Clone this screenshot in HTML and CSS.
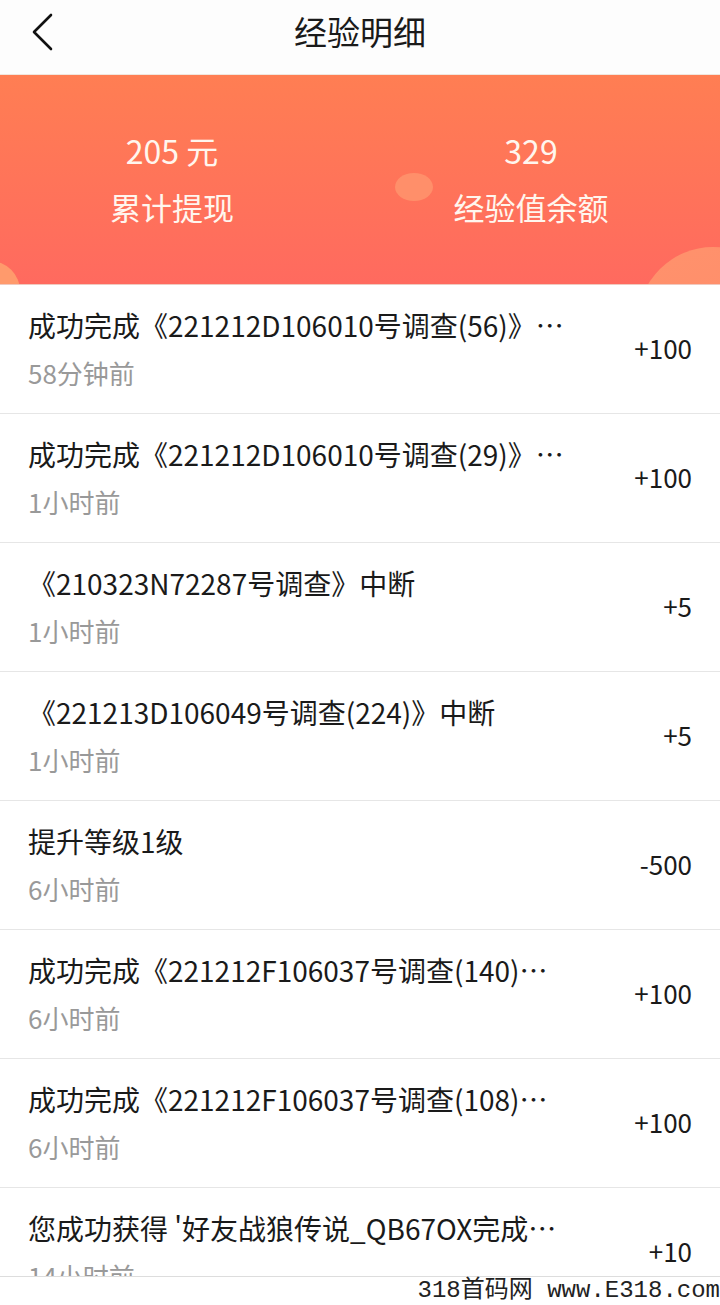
FILE: index.html
```html
<!DOCTYPE html>
<html lang="zh-CN">
<head>
<meta charset="utf-8">
<title>经验明细</title>
<link rel="stylesheet" href="styles.css">
</head>
<body>
<div class="page">
  <header class="topbar">
    <svg class="back" width="24" height="40" viewBox="0 0 24 40" aria-hidden="true">
      <polyline points="20,3 3,20 20,37" fill="none" stroke="#111" stroke-width="2.6" stroke-linecap="round" stroke-linejoin="round"/>
    </svg>
    <h1 class="title">经验明细</h1>
  </header>

  <section class="banner">
    <span class="dot dot-mid"></span>
    <span class="dot dot-left"></span>
    <span class="dot dot-right"></span>
    <div class="stat">
      <div class="stat-num">205 元</div>
      <div class="stat-label">累计提现</div>
    </div>
    <div class="stat">
      <div class="stat-num">329</div>
      <div class="stat-label">经验值余额</div>
    </div>
  </section>

  <ul class="list">
    <li class="row">
      <div class="info"><div class="name">成功完成《221212D106010号调查(56)》…</div><div class="time">58分钟前</div></div>
      <div class="amount">+100</div>
    </li>
    <li class="row">
      <div class="info"><div class="name">成功完成《221212D106010号调查(29)》…</div><div class="time">1小时前</div></div>
      <div class="amount">+100</div>
    </li>
    <li class="row">
      <div class="info"><div class="name">《210323N72287号调查》中断</div><div class="time">1小时前</div></div>
      <div class="amount">+5</div>
    </li>
    <li class="row">
      <div class="info"><div class="name">《221213D106049号调查(224)》中断</div><div class="time">1小时前</div></div>
      <div class="amount">+5</div>
    </li>
    <li class="row">
      <div class="info"><div class="name">提升等级1级</div><div class="time">6小时前</div></div>
      <div class="amount">-500</div>
    </li>
    <li class="row">
      <div class="info"><div class="name">成功完成《221212F106037号调查(140)…</div><div class="time">6小时前</div></div>
      <div class="amount">+100</div>
    </li>
    <li class="row">
      <div class="info"><div class="name">成功完成《221212F106037号调查(108)…</div><div class="time">6小时前</div></div>
      <div class="amount">+100</div>
    </li>
    <li class="row row-last">
      <div class="info"><div class="name">您成功获得 '好友战狼传说_QB67OX完成…</div><div class="time">14小时前</div></div>
      <div class="amount">+10</div>
    </li>
  </ul>

  <footer class="footer">318首码网 www.E318.com</footer>
</div>
</body>
</html>
```

FILE: styles.css
```css
* { box-sizing: border-box; margin: 0; padding: 0; }

html, body {
  width: 720px;
  height: 1305px;
  background: #fff;
  overflow: hidden;
}

body {
  font-family: "Noto Sans CJK SC", "Noto Sans", sans-serif;
  color: #1a1a1a;
}

.page {
  display: flex;
  flex-direction: column;
  height: 1305px;
}

.topbar {
  position: relative;
  height: 75px;
  flex: none;
  display: flex;
  align-items: center;
  justify-content: center;
  background: #fdfdfd;
  border-bottom: 1px solid #f1e6dd;
}

.back {
  position: absolute;
  left: 31px;
  top: 12px;
}

.title {
  font-size: 33px;
  font-weight: 400;
  color: #1a1a1a;
  line-height: 40px;
  margin-top: -12px;
}

.banner {
  position: relative;
  overflow: hidden;
  height: 210px;
  flex: none;
  display: grid;
  grid-template-columns: 344px 374px;
  align-content: center;
  background: linear-gradient(180deg, #ff7e53 0%, #ff6a5f 100%);
  border-bottom: 1px solid #f0c9bf;
}

.stat {
  position: relative;
  text-align: center;
  color: #fff6ee;
  z-index: 1;
}

.stat-num {
  font-size: 32px;
  line-height: 56px;
  margin-top: -2px;
}

.stat-label {
  font-size: 31px;
  line-height: 58px;
}

.dot {
  position: absolute;
  border-radius: 50%;
}

.dot-mid {
  left: 395px;
  top: 98px;
  width: 38px;
  height: 28px;
  background: #ff8f6a;
}

.dot-left {
  left: -40px;
  top: 186px;
  width: 60px;
  height: 60px;
  background: #ff9a6c;
}

.dot-right {
  left: 638px;
  top: 172px;
  width: 150px;
  height: 150px;
  background: linear-gradient(160deg, #ff926c 0%, #ff8a6a 100%);
}

.list {
  list-style: none;
  height: 991px;
  flex: none;
  overflow: hidden;
}

.row {
  height: 129px;
  display: flex;
  align-items: center;
  padding: 0 28px;
  border-bottom: 1px solid #e6e6e6;
}

.info {
  flex: 1;
  min-width: 0;
}

.name {
  font-size: 28px;
  line-height: 48px;
  color: #1a1a1a;
  white-space: nowrap;
}

.time {
  font-size: 26px;
  line-height: 48px;
  color: #999;
}

.amount {
  flex: none;
  font-size: 26px;
  color: #1a1a1a;
  margin-left: 16px;
  padding-bottom: 3px;
}

.footer {
  flex: none;
  height: 29px;
  border-top: 1px solid #ddd;
  text-align: right;
  font-family: "Liberation Mono", "Noto Sans CJK SC", monospace;
  font-size: 24px;
  line-height: 28px;
  color: #222;
  white-space: nowrap;
}
```
